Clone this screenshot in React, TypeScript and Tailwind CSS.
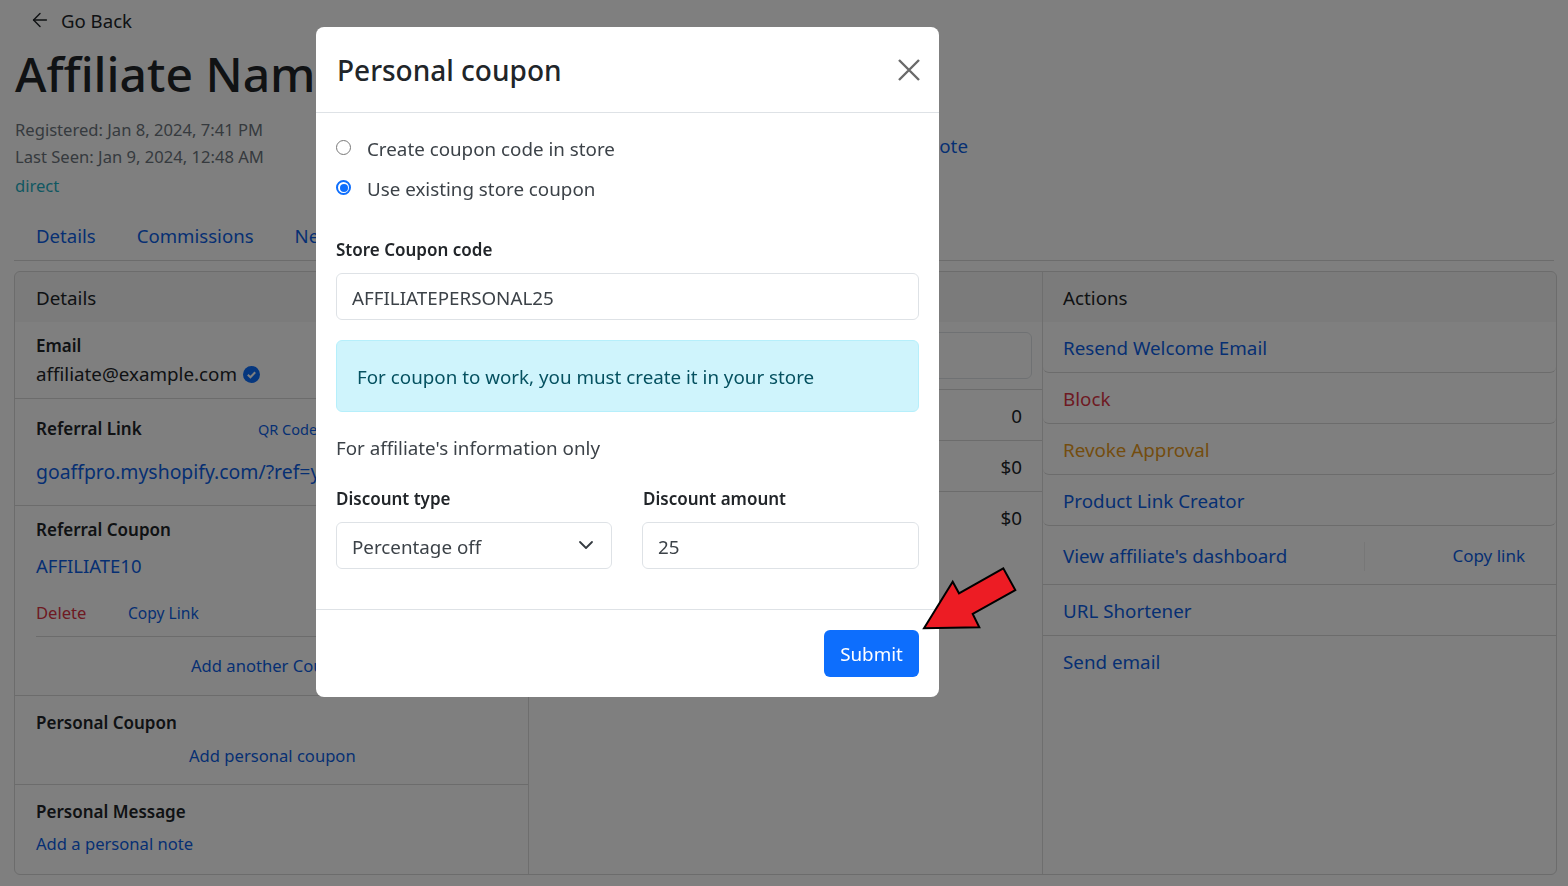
import { ArrowLeft, ChevronDown } from "lucide-react"

const LINK = "text-[#0d5fe6]"

const ACTIONS = [
    { label: "Resend Welcome Email", color: LINK },
    { label: "Block", color: "text-[#dc3545]" },
    { label: "Revoke Approval", color: "text-[#e89a1c]" },
    { label: "Product Link Creator", color: LINK },
]

function Arrow() {
    return (
        <svg className="absolute left-[915px] top-[560px]" width="110" height="78" viewBox="915 560 110 78">
            <polygon
                points="924,628.3 952.7,581.7 959,593.3 1003.3,568.3 1015.3,590 972.7,614 979.3,627.3"
                fill="#ed1c24"
                stroke="#000"
                strokeWidth="2"
            />
        </svg>
    )
}

function DetailsColumn() {
    return (
        <div className="flex flex-col border-r border-[#dcdcdc] text-[18.8px]">
            <div className="h-[50px] px-[21px] pt-[3px] flex items-center bg-black/[.03] text-[#212529]">Details</div>
            <div className="h-[77px] px-[21px] pt-[10px] border-b border-[#d8d8d8] leading-[28px]">
                <div className="font-semibold text-[17px] text-[#212529]">Email</div>
                <div className="flex items-center gap-[6px] text-[#212529]">
                    affiliate@example.com
                    <svg width="17" height="17" viewBox="0 0 17 17">
                        <circle cx="8.5" cy="8.5" r="8.5" fill="#0d6efd" />
                        <path d="M4.8 8.8l2.6 2.5 4.8-5" fill="none" stroke="#fff" strokeWidth="2" />
                    </svg>
                </div>
            </div>
            <div className="h-[107px] px-[21px] pt-[16px] border-b border-[#d8d8d8] leading-[28px] overflow-hidden">
                <div className="flex items-center">
                    <span className="w-[222px] font-semibold text-[17px] text-[#212529]">Referral Link</span>
                    <span className={`text-[14.5px] ${LINK}`}>QR Code</span>
                </div>
                <div className={`mt-[15px] whitespace-nowrap text-[19.4px] ${LINK}`}>goaffpro.myshopify.com/?ref=yz</div>
            </div>
            <div className="px-[21px] pt-[10px] leading-[28px]">
                <div className="font-semibold text-[17px] text-[#212529]">Referral Coupon</div>
                <div className={`mt-[8px] text-[18.5px] ${LINK}`}>AFFILIATE10</div>
                <div className="flex mt-[19px] pb-[9px] text-[16.6px] border-b border-[#d8d8d8]">
                    <span className="w-[92px] text-[#dc3545]">Delete</span>
                    <span className={`text-[15.6px] ${LINK}`}>Copy Link</span>
                </div>
            </div>
            <div className="h-[59px] pl-[176px] pt-[14px] border-b border-[#d8d8d8] leading-[28px] whitespace-nowrap overflow-hidden">
                <span className={`text-[16.6px] ${LINK}`}>Add another Coupon</span>
            </div>
            <div className="h-[89px] px-[21px] pt-[13px] border-b border-[#d8d8d8] leading-[28px]">
                <div className="font-semibold text-[17px] text-[#212529]">Personal Coupon</div>
                <div className={`mt-[5px] pl-[153px] text-[16.6px] ${LINK}`}>Add personal coupon</div>
            </div>
            <div className="px-[21px] pt-[13px] leading-[28px]">
                <div className="font-semibold text-[17px] text-[#212529]">Personal Message</div>
                <div className={`mt-[4px] text-[16.6px] ${LINK}`}>Add a personal note</div>
            </div>
        </div>
    )
}

function StatsColumn() {
    return (
        <div className="flex flex-col border-r border-[#dcdcdc] text-[18.8px] text-[#212529]">
            <div className="h-[50px] bg-black/[.03]" />
            <div className="h-[68px] pt-[10px] pl-[10px] pr-[10px] border-b border-[#d8d8d8]">
                <div className="h-[47px] rounded-md border border-[#dee2e6]" />
            </div>
            {["0", "$0", "$0"].map((v, i) => (
                <div key={i} className="h-[51px] border-b border-[#d8d8d8] last:border-b-0 last:pt-[2px] flex items-center justify-end pr-[20px] pt-[3px]">
                    {v}
                </div>
            ))}
        </div>
    )
}

function ActionsColumn() {
    return (
        <div className="flex flex-col text-[18.8px]">
            <div className="h-[50px] px-[20px] pt-[3px] flex items-center bg-black/[.03] text-[#212529]">Actions</div>
            {ACTIONS.map((a) => (
                <div key={a.label} className={`h-[51px] px-[20px] pt-[3px] flex items-center border-b border-[#d8d8d8] rounded-b-md ${a.color}`}>
                    {a.label}
                </div>
            ))}
            <div className={`h-[59px] px-[20px] pt-[3px] flex items-center justify-between border-b border-[#d8d8d8] ${LINK}`}>
                <span className="w-[302px] border-r border-[#efefef]">View affiliate's dashboard</span>
                <span className="pr-[11px] text-[17px] -mt-[2px]">Copy link</span>
            </div>
            <div className={`h-[51px] px-[20px] pt-[3px] flex items-center border-b border-[#d8d8d8] ${LINK}`}>URL Shortener</div>
            <div className={`h-[51px] px-[20px] pt-px flex items-center ${LINK}`}>Send email</div>
        </div>
    )
}

function Modal() {
    return (
        <div className="absolute left-[316px] top-[27px] w-[623px] h-[670px] bg-white rounded-lg flex flex-col text-[#212529] text-[18.8px]">
            <div className="h-[86px] shrink-0 border-b border-[#dee2e6] flex items-center justify-between pl-[21px] pr-[19px]">
                <h5 className="text-[28px] font-medium leading-none mt-px">Personal coupon</h5>
                <svg width="22" height="22" viewBox="0 0 22 22" className="text-[#6a6a6a]">
                    <path d="M1 1l20 20M21 1L1 21" fill="none" stroke="currentColor" strokeWidth="2.4" />
                </svg>
            </div>
            <div className="flex-1 px-[20px] pt-[16px]">
                <label className="flex items-center h-[40px]">
                    <span className="w-[15px] h-[15px] rounded-full border border-[#777] -mt-[3px]" />
                    <span className="ml-[16px] text-[#3c4248]">Create coupon code in store</span>
                </label>
                <label className="flex items-center h-[40px]">
                    <span className="w-[15px] h-[15px] rounded-full border-2 border-[#0d6efd] flex items-center justify-center -mt-[3px]">
                        <span className="w-[8px] h-[8px] rounded-full bg-[#0d6efd]" />
                    </span>
                    <span className="ml-[16px] text-[#3c4248]">Use existing store coupon</span>
                </label>
                <div className="mt-[27px] text-[17px] font-semibold leading-[28px]">Store Coupon code</div>
                <div className="mt-[9px] h-[47px] rounded-md border border-[#dee2e6] px-[15px] pt-[4px] flex items-center text-[#3c4248]">
                    AFFILIATEPERSONAL25
                </div>
                <div className="mt-[20px] h-[72px] rounded-md border border-[#b6effb] bg-[#cff4fc] px-[20px] pt-[2px] flex items-center text-[#055160]">
                    For coupon to work, you must create it in your store
                </div>
                <div className="mt-[22px] leading-[28px] text-[#3c4248]">For affiliate's information only</div>
                <div className="mt-[23px] grid grid-cols-[276px_277px] gap-x-[30px]">
                    <div>
                        <div className="text-[17px] font-semibold leading-[28px]">Discount type</div>
                        <div className="mt-[9px] h-[47px] rounded-md border border-[#dee2e6] pl-[15px] pr-[13px] pt-[4px] flex items-center justify-between text-[#3c4248]">
                            Percentage off
                            <ChevronDown size={24} strokeWidth={1.8} className="text-[#343a40] -mt-[6px]" />
                        </div>
                    </div>
                    <div>
                        <div className="text-[17px] font-semibold leading-[28px] pl-px">Discount amount</div>
                        <div className="mt-[9px] h-[47px] rounded-md border border-[#dee2e6] px-[15px] pt-[4px] flex items-center text-[#3c4248]">
                            25
                        </div>
                    </div>
                </div>
            </div>
            <div className="h-[88px] shrink-0 border-t border-[#dee2e6] flex justify-end items-start pt-[20px] pr-[20px]">
                <button className="w-[95px] h-[47px] pt-px rounded-md bg-[#0d6efd] text-white">Submit</button>
            </div>
        </div>
    )
}

export default function App() {
    return (
        <div className="relative h-[886px] overflow-hidden bg-white font-['Noto_Sans',sans-serif]">
            <div className="px-[14px] text-[#212529]">
                <div className="h-[42px] pl-[15px] flex items-center gap-[10px] text-[18.6px]">
                    <ArrowLeft size={22} strokeWidth={1.6} className="-mt-[2px]" />
                    Go Back
                </div>
                <h1 className="text-[48px] font-medium leading-[64px] pl-px">Affiliate Name</h1>
                <div className="w-[954px] flex items-center justify-between mt-[10px] pl-px">
                    <div className="text-[16.6px] text-[#6c757d]">
                        <div className="leading-[27px]">Registered: Jan 8, 2024, 7:41 PM</div>
                        <div className="leading-[27px]">Last Seen: Jan 9, 2024, 12:48 AM</div>
                        <div className="leading-[32px] text-[#1fb0c4]">direct</div>
                    </div>
                    <div className={`text-[18.8px] -mt-[26px] ${LINK}`}>Add a note</div>
                </div>
                <div className="mt-[12px] h-[47px] border-b border-[#d8d8d8] flex pl-[22px] gap-[41px] text-[18.6px] leading-[44px]">
                    <span className={LINK}>Details</span>
                    <span className={LINK}>Commissions</span>
                    <span className={LINK}>Network</span>
                </div>
                <div className="mt-[10px] h-[604px] w-[1543px] rounded-md border border-[#d8d8d8] grid grid-cols-[514px_514px_1fr] overflow-hidden">
                    <DetailsColumn />
                    <StatsColumn />
                    <ActionsColumn />
                </div>
            </div>
            <div className="fixed inset-0 bg-black/50" />
            <Modal />
            <Arrow />
        </div>
    )
}
